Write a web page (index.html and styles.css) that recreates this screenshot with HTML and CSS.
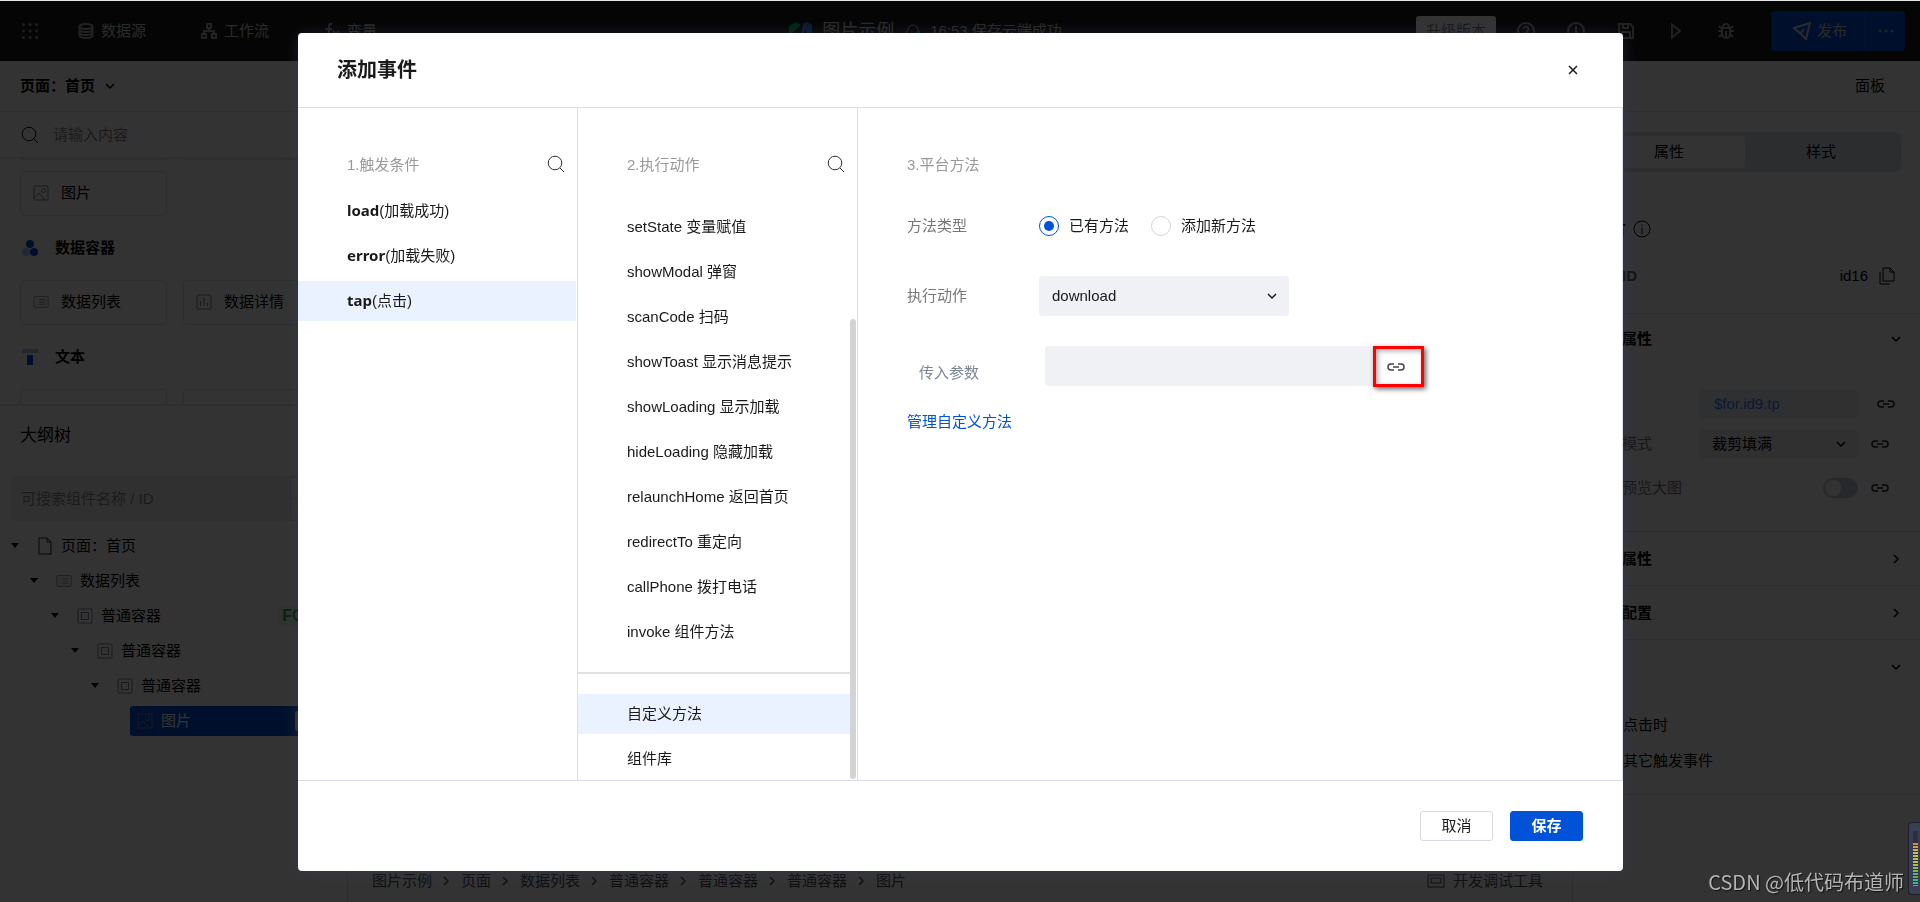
FILE: index.html
```html
<!DOCTYPE html>
<html lang="zh-CN">
<head>
<meta charset="utf-8">
<title>图片示例</title>
<link rel="stylesheet" href="styles.css">
</head>
<body>
<svg class="sprite" aria-hidden="true">
  <symbol id="i-search" viewBox="0 0 18 18"><circle cx="8" cy="8" r="6.8"/><path d="M13 13l4 4"/></symbol>
  <symbol id="i-down" viewBox="0 0 20 20"><path d="M2 6l8 8 8-8"/></symbol>
  <symbol id="i-right" viewBox="0 0 20 20"><path d="M6 2l8 8-8 8"/></symbol>
  <symbol id="i-link" viewBox="0 0 36 16"><path d="M14 2H8a6 6 0 0 0 0 12h6M22 2h6a6 6 0 0 1 0 12h-6M12 8h12"/></symbol>
  <symbol id="i-picture" viewBox="0 0 16 16"><rect x="1" y="1" width="14" height="14" rx="1"/><circle cx="10.500" cy="5.500" r="2"/><path d="M1 13l5-5 6 7"/></symbol>
  <symbol id="i-list" viewBox="0 0 18 14"><rect x="1" y="1" width="16" height="12" rx="1"/><path d="M4 4.500h1M4 7h1M4 9.500h1M7 4.500h7M7 7h7M7 9.500h7"/></symbol>
  <symbol id="i-chart" viewBox="0 0 16 16"><rect x="1" y="1" width="14" height="14" rx="1"/><path d="M4.500 12V7M8 12V4M11.500 12V9"/></symbol>
  <symbol id="i-box" viewBox="0 0 16 16"><rect x="1" y="1" width="14" height="14" rx="1"/><rect x="4.500" y="4.500" width="7" height="7"/></symbol>
  <symbol id="i-caret" viewBox="0 0 8 6"><path d="M0 0h8L4 5z"/></symbol>
</svg>

<div class="app">
  <header class="topbar">
    <nav class="topbar-nav">
      <svg class="dots" viewBox="0 0 16 16"><g><circle cx="1.500" cy="1.500" r="1.500"/><circle cx="8" cy="1.500" r="1.500"/><circle cx="14.500" cy="1.500" r="1.500"/><circle cx="1.500" cy="8" r="1.500"/><circle cx="8" cy="8" r="1.500"/><circle cx="14.500" cy="8" r="1.500"/><circle cx="1.500" cy="14.500" r="1.500"/><circle cx="8" cy="14.500" r="1.500"/><circle cx="14.500" cy="14.500" r="1.500"/></g></svg>
      <a class="nav-link" href="#data"><svg class="icon16 bold-line" viewBox="0 0 16 16"><ellipse cx="8" cy="3.500" rx="6.500" ry="2.500"/><path d="M1.500 3.500v9c0 3.300 13 3.300 13 0v-9M1.500 6.500c0 3.300 13 3.300 13 0M1.500 9.500c0 3.300 13 3.300 13 0"/></svg>数据源</a>
      <a class="nav-link" href="#flow"><svg class="icon16 bold-line" viewBox="0 0 16 16"><path d="M6 1h4v4H6zM1 11h4v4H1zM11 11h4v4h-4zM8 5v3M3 11V8h10v3"/></svg>工作流</a>
      <a class="nav-link" href="#vars"><svg class="icon16 bold-line" viewBox="0 0 16 16"><path d="M8 1C5 0 5 2 5 5v6c0 3-1 4-4 4M1 6h7M9 8l6 7M15 8l-6 7"/></svg>变量</a>
    </nav>
    <div class="topbar-title">
      <svg class="logo" viewBox="0 0 23 18"><path fill="#00b578" d="M0 4l7-4 4 2v2L0 14z"/><path fill="#3b7cff" d="M14 2l4-2 5 3v11h-3L16 8l-3 6h-1z"/></svg>
      <strong>图片示例</strong>
      <svg class="icon18" viewBox="0 0 18 18"><path d="M5 15a4 4 0 0 1-1-7 5 5 0 0 1 10 0 4 4 0 0 1-1 7z"/><circle class="ok" cx="14" cy="12" r="3"/></svg>
      <span>16:53 保存云端成功</span>
    </div>
    <div class="topbar-tools">
      <button class="upgrade" type="button">升级版本</button>
      <button class="tool" type="button" aria-label="帮助"><svg class="icon18 bold-line" viewBox="0 0 18 18"><circle cx="9" cy="9" r="8"/><path d="M6.500 7a2.500 2.500 0 1 1 4 2c-1 1-1.500 1-1.500 2.500M9 12.500v1.500"/></svg></button>
      <button class="tool" type="button" aria-label="历史"><svg class="icon18 bold-line" viewBox="0 0 18 18"><circle cx="9" cy="9" r="8"/><path d="M9 4v6l3 2"/></svg></button>
      <button class="tool" type="button" aria-label="保存草稿"><svg class="icon18 bold-line" viewBox="0 0 18 18"><path d="M2 2h11l3 3v11H2zM5 16v-6h8v6M6 2v4h5V2"/></svg></button>
      <button class="tool" type="button" aria-label="预览"><svg class="icon18 bold-line" viewBox="0 0 18 18"><path d="M5 2.500l8 6.500-8 6.500z"/></svg></button>
      <button class="tool" type="button" aria-label="调试"><svg class="icon18 bold-line" viewBox="0 0 18 18"><path d="M6 5a3 3 0 0 1 6 0M5 6h8v6a4 4 0 0 1-8 0zM9 9v7M1 9h4M13 9h4M5 7L2 4M13 7l3-3M5 12l-3 3M13 12l3 3"/></svg></button>
      <div class="publish">
        <button type="button" class="publish-main"><svg class="icon18 bold-line" viewBox="0 0 18 18"><path d="M1 6l16-5-4 16-5-5zM8 11l3-4"/></svg>发布</button>
        <button type="button" class="publish-more" aria-label="更多"><svg class="more" viewBox="0 0 16 4"><circle cx="2" cy="2" r="1.500"/><circle cx="8" cy="2" r="1.500"/><circle cx="14" cy="2" r="1.500"/></svg></button>
      </div>
    </div>
  </header>

  <div class="pagebar">
    <button type="button" class="page-pick">页面：首页<svg class="icon10"><use href="#i-down"/></svg></button>
    <button type="button" class="panel-btn">面板</button>
  </div>

  <div class="workspace">
    <aside class="left">
      <section class="palette">
        <label class="palette-search"><svg class="icon18"><use href="#i-search"/></svg><input type="text" placeholder="请输入内容" aria-label="搜索组件"></label>
        <div class="palette-list">
          <div class="cards stub"><div class="card"></div><div class="card"></div></div>
          <div class="cards"><div class="card"><svg class="icon16"><use href="#i-picture"/></svg>图片</div></div>
          <h3><svg class="icon16 solid" viewBox="0 0 16 16"><circle cx="8" cy="4" r="4" fill="#0052d9"/><circle cx="4" cy="12" r="4" fill="#a9c2f5"/><circle cx="12" cy="12" r="4" fill="#0052d9"/></svg>数据容器</h3>
          <div class="cards">
            <div class="card"><svg class="icon16"><use href="#i-list"/></svg>数据列表</div>
            <div class="card"><svg class="icon16"><use href="#i-chart"/></svg>数据详情</div>
          </div>
          <h3><svg class="icon16 solid" viewBox="0 0 16 16"><path fill="#a9c2f5" d="M0 0h16v4H0z"/><path fill="#0052d9" d="M5 6h6v10H5z"/></svg>文本</h3>
          <div class="cards"><div class="card"></div><div class="card"></div></div>
        </div>
      </section>
      <section class="outline">
        <h2>大纲树</h2>
        <div class="outline-search">
          <input type="text" placeholder="可搜索组件名称 / ID" aria-label="搜索大纲">
          <div class="stepper"><span></span><span></span></div>
        </div>
        <ul class="tree">
          <li class="l0"><svg class="caret"><use href="#i-caret"/></svg><svg class="icon16 page-icon" viewBox="0 0 16 18"><path d="M2 1h8l4 4v12H2zM10 1v4h4"/></svg>页面：首页</li>
          <li class="l1"><svg class="caret"><use href="#i-caret"/></svg><svg class="icon16"><use href="#i-list"/></svg>数据列表</li>
          <li class="l2"><svg class="caret"><use href="#i-caret"/></svg><svg class="icon16"><use href="#i-box"/></svg>普通容器<b class="tag-for">FOR</b></li>
          <li class="l3"><svg class="caret"><use href="#i-caret"/></svg><svg class="icon16"><use href="#i-box"/></svg>普通容器</li>
          <li class="l4"><svg class="caret"><use href="#i-caret"/></svg><svg class="icon16"><use href="#i-box"/></svg>普通容器</li>
          <li class="l5"><div class="picked"><svg class="icon16"><use href="#i-picture"/></svg>图片<i></i></div></li>
        </ul>
      </section>
    </aside>

    <main class="stage">
      <div class="canvas"></div>
      <footer class="crumbs">
        <span>图片示例</span><svg class="icon10"><use href="#i-right"/></svg>
        <span>页面</span><svg class="icon10"><use href="#i-right"/></svg>
        <span>数据列表</span><svg class="icon10"><use href="#i-right"/></svg>
        <span>普通容器</span><svg class="icon10"><use href="#i-right"/></svg>
        <span>普通容器</span><svg class="icon10"><use href="#i-right"/></svg>
        <span>普通容器</span><svg class="icon10"><use href="#i-right"/></svg>
        <span>图片</span>
        <button type="button" class="devtools"><svg class="icon18" viewBox="0 0 18 14"><rect x="1" y="1" width="16" height="12"/><rect x="4" y="4" width="10" height="5"/></svg>开发调试工具</button>
      </footer>
    </main>

    <aside class="right">
      <div class="tabs"><button type="button" class="on">属性</button><button type="button">样式</button></div>
      <div class="comp-name"><strong>图片</strong><svg class="icon18" viewBox="0 0 18 18"><circle cx="9" cy="9" r="8"/><path d="M9 7.500V14M9 4.500V6"/></svg></div>
      <div class="comp-id"><b>组件ID</b><span>id16</span><svg class="icon18" viewBox="0 0 18 18"><path d="M5 1h7l4 4v9H5zM12 1v4h4M2 5v12h10"/></svg></div>
      <h3>基础属性<svg class="icon10"><use href="#i-down"/></svg></h3>
      <div class="props">
        <div class="prop"><span class="prop-label"></span><input class="field" type="text" value="$for.id9.tp" aria-label="图片地址"><svg class="link far"><use href="#i-link"/></svg></div>
        <div class="prop"><label for="p-mode">填充模式</label><div class="pick"><select id="p-mode" class="field"><option>裁剪填满</option></select><svg class="icon10"><use href="#i-down"/></svg></div><svg class="link"><use href="#i-link"/></svg></div>
        <div class="prop"><label for="p-view">支持预览大图</label><input id="p-view" class="toggle" type="checkbox"><svg class="link"><use href="#i-link"/></svg></div>
      </div>
      <h3>数据属性<svg class="icon10"><use href="#i-right"/></svg></h3>
      <h3>通用配置<svg class="icon10"><use href="#i-right"/></svg></h3>
      <h3>事件<svg class="icon10"><use href="#i-down"/></svg></h3>
      <ul class="events"><li>点击时</li><li>其它触发事件</li></ul>
    </aside>
  </div>
</div>

<div class="overlay">
  <div class="dialog" role="dialog" aria-labelledby="dlg-title">
    <header class="dialog-head">
      <h1 id="dlg-title">添加事件</h1>
      <button type="button" class="close" aria-label="关闭"><svg class="icon10" viewBox="0 0 20 20"><path d="M2 2l16 16M18 2L2 18"/></svg></button>
    </header>
    <div class="dialog-body">
      <section class="col triggers">
        <div class="col-head"><h2>1.触发条件</h2><svg class="icon18"><use href="#i-search"/></svg></div>
        <ul class="options">
          <li><b>load</b>(加载成功)</li>
          <li><b>error</b>(加载失败)</li>
          <li class="on"><b>tap</b>(点击)</li>
        </ul>
      </section>
      <section class="col actions">
        <div class="col-head"><h2>2.执行动作</h2><svg class="icon18"><use href="#i-search"/></svg></div>
        <ul class="options">
          <li>setState 变量赋值</li>
          <li>showModal 弹窗</li>
          <li>scanCode 扫码</li>
          <li>showToast 显示消息提示</li>
          <li>showLoading 显示加载</li>
          <li>hideLoading 隐藏加载</li>
          <li>relaunchHome 返回首页</li>
          <li>redirectTo 重定向</li>
          <li>callPhone 拨打电话</li>
          <li>invoke 组件方法</li>
        </ul>
        <ul class="options extra">
          <li class="on">自定义方法</li>
          <li>组件库</li>
        </ul>
        <div class="thumb"></div>
      </section>
      <section class="method">
        <h2>3.平台方法</h2>
        <div class="form">
          <div class="row kind">
            <span class="label">方法类型</span>
            <div class="radios">
              <label><input type="radio" name="kind" checked>已有方法</label>
              <label><input type="radio" name="kind">添加新方法</label>
            </div>
          </div>
          <div class="row action">
            <label class="label" for="act">执行动作</label>
            <div class="pick"><select id="act" class="field"><option>download</option></select><svg class="icon10"><use href="#i-down"/></svg></div>
          </div>
          <div class="row param">
            <label class="label" for="arg">传入参数</label>
            <input id="arg" class="field" type="text">
            <button type="button" class="bind" aria-label="绑定数据"><svg class="link"><use href="#i-link"/></svg></button>
          </div>
          <a href="#methods">管理自定义方法</a>
        </div>
      </section>
    </div>
    <footer class="dialog-foot">
      <button type="button" class="btn">取消</button>
      <button type="button" class="btn primary">保存</button>
    </footer>
  </div>
</div>

<div class="watermark">CSDN @低代码布道师</div>
<div class="meter"><div></div></div>
</body>
</html>
```
FILE: styles.css
```css
* { box-sizing: border-box; }

body {
  margin: 0;
  height: 100vh;
  overflow: hidden;
  border-top: 1px solid #e3e6e4;
  font: 15px/20px "Liberation Sans", "Noto Sans CJK SC", sans-serif;
  color: #000;
}

h1, h2, h3, ul { margin: 0; padding: 0; font-size: inherit; }
ul { list-style: none; }
button, input, select { font: inherit; color: inherit; margin: 0; padding: 0; border: 0; background: none; }
a { text-decoration: none; color: inherit; }

svg { fill: none; stroke: currentColor; stroke-width: 1; flex: none; display: block; }
.sprite { position: absolute; width: 0; height: 0; }
.icon10 { width: 10px; height: 10px; stroke-width: 3; }
.icon16 { width: 16px; height: 16px; }
.icon18 { width: 18px; height: 18px; }
.link { width: 18px; height: 8px; stroke-width: 3; }
.bold-line { stroke-width: 2; }
.solid { stroke: none; }

/* editor behind the dialog */
.app { height: 100%; display: flex; flex-direction: column; background: #fff; }

.topbar {
  flex: none;
  height: 60px;
  display: grid;
  grid-template-columns: 1fr auto 1fr;
  align-items: center;
  padding: 0 15px 0 22px;
  background: #191919;
  color: #d0d0d0;
}
.topbar-nav { display: flex; align-items: center; }
.topbar-nav .bold-line { color: #aaa; }
.dots { width: 16px; height: 16px; fill: #999; stroke: none; margin-right: 40px; }
.nav-link { display: flex; align-items: center; gap: 7px; margin-right: 55px; }
.topbar-title { display: flex; align-items: center; gap: 8px; padding-right: 76px; }
.topbar-title strong { font-size: 18px; font-weight: 400; margin: 0 2px; }
.logo { width: 23px; height: 18px; stroke: none; }
.ok { fill: #00a870; stroke: none; }
.topbar-tools { display: flex; align-items: center; justify-content: flex-end; }
.upgrade { width: 80px; height: 30px; margin-right: 5px; border-radius: 3px; background: #fff; color: #777; }
.tool { width: 50px; height: 40px; display: flex; align-items: center; justify-content: center; color: #a5a5a5; }
.publish { display: flex; height: 40px; margin-left: 20px; border-radius: 4px; background: #0052d9; }
.publish-main { width: 95px; display: flex; align-items: center; justify-content: center; gap: 6px; padding-left: 4px; border-right: 1px solid #2468dd; }
.publish-more { width: 39px; display: flex; align-items: center; justify-content: center; }
.more { width: 16px; height: 4px; fill: #aaa; stroke: none; }

.pagebar {
  flex: none;
  height: 51px;
  display: flex;
  align-items: center;
  justify-content: space-between;
  padding: 0 35px 0 20px;
  border-bottom: 1px solid #e3e6eb;
}
.page-pick { display: flex; align-items: center; gap: 10px; font-weight: 700; }

.workspace { flex: 1; min-height: 0; display: flex; }

.left { width: 348px; flex: none; display: flex; flex-direction: column; border-right: 1px solid #dcdfe6; }
.palette { height: 294px; flex: none; overflow: hidden; border-bottom: 2px solid #e0e3ea; }
.palette-search { display: flex; align-items: center; gap: 14px; height: 47px; padding: 0 21px; border-bottom: 2px solid #e3e6eb; }
.palette-search input { flex: 1; }
::placeholder { color: #888; opacity: 1; }
.palette-list { padding: 0 20px; }
.cards { display: grid; grid-template-columns: 147px 147px; gap: 16px; }
.card { height: 45px; display: flex; align-items: center; gap: 12px; padding: 0 12px 2px; border: 1px solid #dfe2ea; border-radius: 4px; }
.card svg, .tree .icon16 { color: #808695; }
.stub { margin-bottom: 11px; }
.stub .card { height: 1px; padding: 0; border-width: 0 0 1px; }
.palette-list h3 { height: 64px; display: flex; align-items: center; gap: 17px; padding-left: 2px; }

.outline { padding-top: 20px; }
.outline h2 { padding-left: 20px; font-size: 17px; font-weight: 400; }
.outline-search { display: flex; height: 45px; margin: 30px 10px 7px; }
.outline-search input { width: 280px; padding-left: 11px; border-radius: 4px; background: #eff0f3; }
.stepper { width: 38px; display: grid; border: 1px solid #d8dbe2; }
.stepper span + span { border-top: 1px solid #d8dbe2; }
.tree li { height: 35px; display: flex; align-items: center; gap: 8px; }
.caret { width: 8px; height: 6px; fill: currentColor; stroke: none; margin-right: 10px; }
.tree .page-icon { height: 18px; color: #222; }
.l0 { padding-left: 11px; }
.l1 { padding-left: 30px; }
.l2 { padding-left: 51px; }
.l3 { padding-left: 71px; }
.l4 { padding-left: 91px; }
.l5 { padding-left: 130px; }
.tag-for { margin: 0 26px 0 auto; padding: 0 5px; border-radius: 3px; background: #e8f8ee; font-size: 16px; color: #1fa83c; }
.picked { flex: 1; height: 30px; display: flex; align-items: center; gap: 8px; padding-left: 7px; border-radius: 3px; background: #0052d9; color: #fff; }
.picked i { width: 34px; height: 20px; margin: 0 18px 0 auto; border-radius: 3px; background: #fff; }

.stage { flex: 1; min-width: 0; display: flex; flex-direction: column; }
.canvas { flex: 1; background: #f5f6f8; }
.crumbs { height: 42px; display: flex; align-items: center; gap: 9px; padding: 0 29px 0 24px; color: #444; }
.crumbs .icon10 { margin-right: 1px; }
.devtools { display: flex; align-items: center; gap: 8px; margin-left: auto; }

.right { width: 348px; flex: none; border-left: 1px solid #dcdfe6; }
.tabs { display: grid; grid-template-columns: 1fr 1fr; height: 40px; margin: 20px 19px 0 16px; padding: 4px; border-radius: 6px; background: #dde1e8; }
.tabs .on { border-radius: 4px; background: #fff; }
.comp-name { display: flex; align-items: center; gap: 6px; height: 20px; margin: 47px 0 0 20px; font-size: 17px; }
.comp-id { display: flex; align-items: center; gap: 10px; padding: 27px 24px 27px 19px; border-bottom: 1px solid #dcdfe6; }
.comp-id b { margin-right: auto; color: #555; }
.right h3 { height: 54px; display: flex; align-items: center; justify-content: space-between; padding: 0 19px; border-top: 1px solid #dcdfe6; }
.comp-id + h3 { border: 0; height: 50px; }
.props { padding: 20px 0 19px; }
.prop { display: flex; align-items: center; height: 40px; padding: 0 31px 0 19px; }
.prop:last-child { height: 48px; }
.prop label, .prop-label { color: #777; flex: 1; }
.prop .field { width: 160px; height: 30px; padding-left: 14px; border-radius: 3px; background: #f0f1f4; }
.prop input.field { padding: 0 0 2px 16px; color: #3b7cff; background: linear-gradient(90deg, #f0f1f4 6px, #e9eef9 6px 93px, #f0f1f4 93px); }
.prop .link { margin-left: 13px; color: #222; }
.prop .far { margin: 0 -6px 0 19px; }

.pick { display: grid; align-items: center; }
.pick > * { grid-area: 1 / 1; }
.pick select { appearance: none; }
.pick svg { justify-self: end; margin-right: 12px; pointer-events: none; }

.toggle { appearance: none; width: 35px; height: 20px; padding: 2px; border-radius: 10px; background: #c3c8d6; }
.toggle::before { content: ""; display: block; width: 16px; height: 16px; border-radius: 8px; background: #fff; }
.events { padding: 14px 0 15px 50px; border-bottom: 1px solid #dcdfe6; }
.events li { height: 36px; padding: 8px 0; }

/* dialog */
.overlay {
  position: fixed;
  inset: 1px 0 0;
  display: flex;
  padding: 32px 297px 31px 298px;
  background: rgba(0, 0, 0, .8);
}
.dialog {
  flex: 1;
  min-width: 0;
  display: flex;
  flex-direction: column;
  border-radius: 4px;
  background: #fff;
  box-shadow: 0 2px 16px rgba(55, 60, 85, .5);
  color: #1a1a1a;
}
.dialog-head { display: flex; align-items: center; justify-content: space-between; height: 75px; padding: 0 45px 0 39px; border-bottom: 1px solid #d9dce3; }
.dialog-head h1 { font-size: 20px; }
.close { padding: 0; }
.dialog-body { flex: 1; min-height: 0; display: grid; grid-template-columns: 280px 280px 1fr; border-right: 1px solid #dcdfe6; }
.dialog-body h2 { color: #999; font-weight: 400; }
.col { position: relative; border-right: 1px solid #dfe1e6; }
.col-head { display: flex; justify-content: space-between; padding: 47px 12px 0 49px; color: #333; }
.triggers .options { margin-top: 16px; }
.actions .options { margin: 32px 7px 0 0; }
.options { display: grid; gap: 5px; }
.options li { height: 40px; padding: 10px 49px; white-space: nowrap; }
.triggers .options li { margin-right: 1px; padding-top: 9px; }
.options b { font-family: "Noto Sans", sans-serif; }
.options .on { background: #ebf2ff; }
.actions .extra { margin-top: 20px; padding-top: 20px; border-top: 2px solid #dfe1e6; }
.thumb { position: absolute; right: 1px; top: 211px; bottom: 1px; width: 6px; border-radius: 3px; background: #d3d3d3; }

.method { padding: 47px 50px 0 49px; }
.form { padding-top: 41px; }
.row { display: flex; }
.label { width: 132px; flex: none; color: #777; }
.radios { display: flex; gap: 22px; }
.radios label { display: flex; align-items: center; gap: 10px; }
.radios input { appearance: none; width: 20px; height: 20px; border: 1px solid #cfd5e0; border-radius: 50%; }
.radios input:checked { padding: 4px; border-color: #0052d9; background: #0052d9 content-box; }
.form .field { height: 40px; border-radius: 4px; background: #eff1f5; }
.action { align-items: center; margin-top: 40px; }
.action .field { width: 250px; padding-left: 13px; }
.param { margin-top: 30px; padding-left: 12px; }
.param .label { width: 126px; padding-top: 17px; color: #7b8594; }
.param .field { width: 328px; border-radius: 4px 0 0 4px; }
.bind { width: 51px; height: 41px; display: flex; align-items: center; padding-left: 11px; border: 3px solid #f00; box-shadow: 2px 2px 5px #666, inset 2px 2px 5px #aaa; }
.bind .link { color: #444; }
.form a { display: inline-block; margin-top: 25px; color: #0052d9; }

.dialog-foot { height: 91px; display: flex; align-items: center; justify-content: flex-end; gap: 17px; padding-right: 40px; border-top: 1px solid #d9dce3; }
.btn { width: 73px; height: 30px; border: 1px solid #d5d9e2; border-radius: 3px; }
.primary { border-color: #0052d9; background: #0052d9; color: #fff; font-weight: 700; }

/* screen overlays */
.watermark { position: fixed; right: 16px; bottom: 8px; font: 20px/24px "Noto Sans CJK SC", sans-serif; color: #b4b4b4; text-shadow: 1px 1px 1px #111; }
.meter { position: fixed; right: 0; bottom: 7px; width: 12px; height: 73px; padding: 8px 2px 8px 4px; border: 1px solid #1c1e2b; border-right: 0; border-radius: 4px 0 0 4px; background: #3a3e52; }
.meter div {
  height: 100%;
  background:
    repeating-linear-gradient(rgba(40, 44, 60, 0) 0 2px, #2b2f40 2px 3px),
    linear-gradient(#2b2f40 11px, #d08a5c 12px, #d8c040 22px, #a8c050 34px, #58b070 44px, #38b8a0);
}
```
